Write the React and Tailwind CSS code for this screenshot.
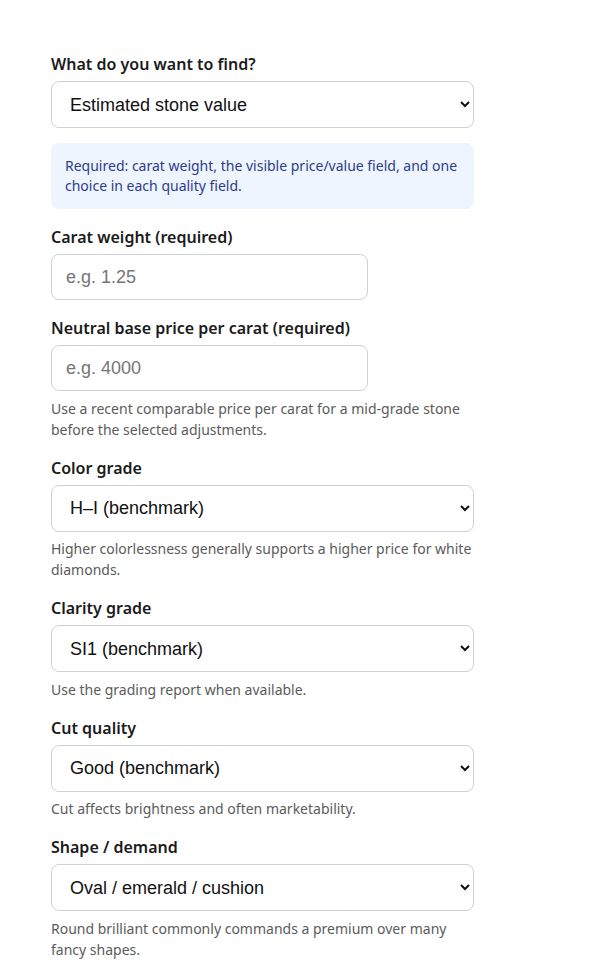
import React from 'react'

const labelCls = 'block text-[16px] leading-6 font-semibold text-[#1b1b1b] mb-[5px]'
const helpCls = 'mt-[6.5px] text-[14px] leading-[21px] text-[#5b5b5b]'
const selectCls =
    'block w-full h-[47px] pl-[14px] pr-2 text-[18px] text-[#111] bg-white border border-[#cdd1d8] rounded-lg font-["Liberation_Sans",Arial,sans-serif]'
const inputCls =
    'block w-[317px] h-[46px] px-[14px] text-[18px] text-[#111] bg-white border border-[#cdd1d8] rounded-lg placeholder:text-[#767676] font-["Liberation_Sans",Arial,sans-serif]'

const SelectField = ({ label, value, options, help }) => (
    <div className="mb-4">
        <label className={labelCls}>{label}</label>
        <select className={selectCls} defaultValue={value}>
            {options.map((o) => (
                <option key={o}>{o}</option>
            ))}
        </select>
        {help && <p className={helpCls}>{help}</p>}
    </div>
)

const InputField = ({ label, placeholder, help }) => (
    <div className="mb-4">
        <label className={labelCls}>{label}</label>
        <input type="text" className={inputCls} placeholder={placeholder} />
        {help && <p className={helpCls}>{help}</p>}
    </div>
)

export default function App() {
    return (
        <div className="min-h-screen bg-white font-['Noto_Sans','Open_Sans',sans-serif]">
            <div className="w-[423px] ml-[51px] pt-[52px]">
                <div className="mb-[15px]">
                    <label className={labelCls}>What do you want to find?</label>
                    <select className={selectCls} defaultValue="Estimated stone value">
                        <option>Estimated stone value</option>
                        <option>Required price per carat</option>
                        <option>Maximum carat weight</option>
                    </select>
                </div>

                <div className="mb-4 rounded-lg bg-[#eef5fe] px-[14px] py-[13px] text-[14px] leading-5 text-[#2d3c8c]">
                    Required: carat weight, the visible price/value field, and one choice in each quality field.
                </div>

                <InputField label="Carat weight (required)" placeholder="e.g. 1.25" />
                <InputField
                    label="Neutral base price per carat (required)"
                    placeholder="e.g. 4000"
                    help="Use a recent comparable price per carat for a mid-grade stone before the selected adjustments."
                />
                <SelectField
                    label="Color grade"
                    value="H–I (benchmark)"
                    options={['D–F (colorless)', 'G (near colorless)', 'H–I (benchmark)', 'J–K (faint)']}
                    help="Higher colorlessness generally supports a higher price for white diamonds."
                />
                <SelectField
                    label="Clarity grade"
                    value="SI1 (benchmark)"
                    options={['IF / VVS', 'VS1 / VS2', 'SI1 (benchmark)', 'SI2', 'I1']}
                    help="Use the grading report when available."
                />
                <SelectField
                    label="Cut quality"
                    value="Good (benchmark)"
                    options={['Excellent', 'Very good', 'Good (benchmark)', 'Fair']}
                    help="Cut affects brightness and often marketability."
                />
                <SelectField
                    label="Shape / demand"
                    value="Oval / emerald / cushion"
                    options={['Round brilliant', 'Oval / emerald / cushion', 'Other fancy shapes']}
                    help="Round brilliant commonly commands a premium over many fancy shapes."
                />
            </div>
        </div>
    )
}
